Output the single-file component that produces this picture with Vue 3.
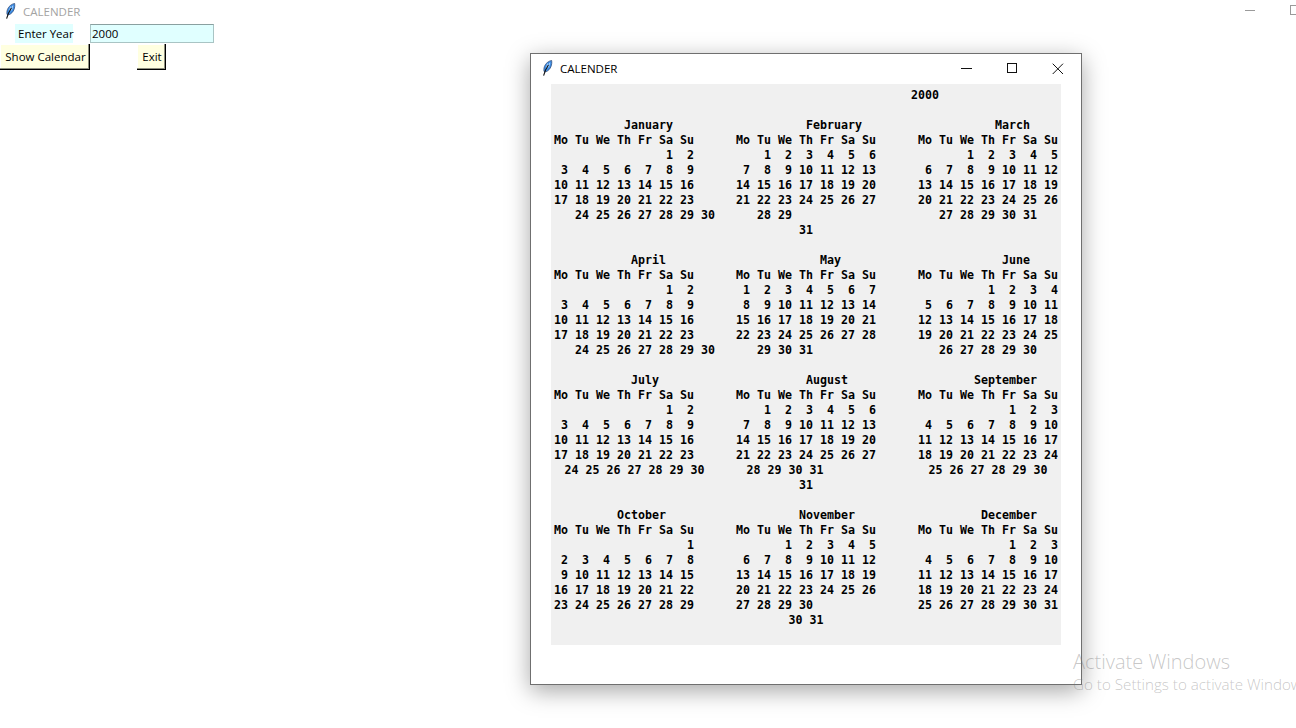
<script setup>
const monthNames = ['January','February','March','April','May','June','July','August','September','October','November','December']
const YEAR = 2000

function center(s, w) {
  const pad = w - s.length
  if (pad <= 0) return s
  const left = Math.floor(pad / 2) + (pad & w & 1)
  return ' '.repeat(left) + s + ' '.repeat(pad - left)
}
function rstrip(s) { return s.replace(/\s+$/, '') }
function join3(cols) { return rstrip(cols.map(c => center(c, 20)).join('      ')) }
function weeks(month) {
  const first = (new Date(Date.UTC(YEAR, month, 1)).getUTCDay() + 6) % 7
  const count = new Date(Date.UTC(YEAR, month + 1, 0)).getUTCDate()
  const cells = Array(first).fill('  ')
  for (let d = 1; d <= count; d++) cells.push(String(d).padStart(2, ' '))
  while (cells.length % 7) cells.push('  ')
  const out = []
  for (let i = 0; i < cells.length; i += 7) out.push(cells.slice(i, i + 7).join(' '))
  return out
}
const lines = [rstrip(center(String(YEAR), 72)), '']
for (let q = 0; q < 4; q++) {
  const ms = [q * 3, q * 3 + 1, q * 3 + 2]
  lines.push(join3(ms.map(m => monthNames[m])))
  lines.push(join3(ms.map(() => 'Mo Tu We Th Fr Sa Su')))
  const cal = ms.map(weeks)
  const height = Math.max(...cal.map(c => c.length))
  for (let j = 0; j < height; j++) lines.push(join3(cal.map(c => c[j] || '')))
  lines.push('')
}
</script>

<template>
  <div class="desktop">
    <section class="main-window">
      <header class="main-title">
        <svg class="feather" viewBox="0 0 12 16" width="12" height="16" aria-hidden="true">
          <path d="M3 11.4 C2.2 7 4.6 2 10.6 .4 C11.4 4 9.8 10 4.8 11.8 Z" fill="#3f8fe6" stroke="#27406e" stroke-width=".7"/>
          <path d="M6.6 3.6 L5.6 8.6 M8.8 2.8 L7.4 7.4" stroke="#cfe4fa" stroke-width=".8" fill="none"/>
          <path d="M7.4 5 C5.6 7.6 3.8 11 2.6 15.6" stroke="#111" stroke-width="1.1" fill="none"/>
        </svg>
        <span>CALENDER</span>
      </header>
      <div class="form-row">
        <label class="year-label">Enter Year</label>
        <input class="year-entry" value="2000" readonly />
      </div>
      <div class="button-row">
        <button class="tk-btn show">Show Calendar</button>
        <button class="tk-btn exit">Exit</button>
      </div>
      <div class="bg-controls" aria-hidden="true">
        <span class="bg-min"></span>
        <span class="bg-max"></span>
      </div>
    </section>

    <section class="cal-window">
      <header class="cal-title">
        <svg class="feather" viewBox="0 0 12 16" width="12" height="16" aria-hidden="true">
          <path d="M3 11.4 C2.2 7 4.6 2 10.6 .4 C11.4 4 9.8 10 4.8 11.8 Z" fill="#3f8fe6" stroke="#27406e" stroke-width=".7"/>
          <path d="M6.6 3.6 L5.6 8.6 M8.8 2.8 L7.4 7.4" stroke="#cfe4fa" stroke-width=".8" fill="none"/>
          <path d="M7.4 5 C5.6 7.6 3.8 11 2.6 15.6" stroke="#111" stroke-width="1.1" fill="none"/>
        </svg>
        <span class="cal-name">CALENDER</span>
        <div class="controls">
          <svg width="12" height="12" viewBox="0 0 12 12" aria-hidden="true"><path d="M1 5.5H12" stroke="#111" fill="none"/></svg>
          <svg width="12" height="12" viewBox="0 0 12 12" aria-hidden="true"><rect x="1.5" y=".5" width="9" height="9" stroke="#111" fill="none"/></svg>
          <svg width="12" height="12" viewBox="0 0 12 12" aria-hidden="true"><path d="M.7 .7L11 11M11 .7L.7 11" stroke="#111" fill="none"/></svg>
        </div>
      </header>
      <div class="cal-body">
        <div class="cal-text">
          <div v-for="(line, i) in lines" :key="i" class="line">{{ line }}</div>
        </div>
      </div>
    </section>

    <div class="activate">
      <div class="a1">Activate Windows</div>
      <div class="a2">Go to Settings to activate Windows.</div>
    </div>
  </div>
</template>

<style>
html, body { margin: 0; background: #fff; overflow: hidden; }
</style>

<style scoped>
.desktop {
  position: relative;
  width: 1296px;
  height: 728px;
  overflow: hidden;
  background: #fff;
  font-family: "Open Sans", "Noto Sans", sans-serif;
  font-size: 11.5px;
  color: #000;
}
.main-window { display: flex; flex-direction: column; }
.main-title {
  display: flex;
  align-items: center;
  height: 22px;
  margin-bottom: 2px;
  padding-left: 4px;
  gap: 7px;
  color: #a3a3a3;
  box-sizing: border-box;
}
.form-row { display: flex; height: 20px; padding-left: 15px; }
.year-label {
  width: 58px;
  height: 19px;
  box-sizing: border-box;
  padding-left: 3px;
  background: #e0ffff;
  text-align: center;
  line-height: 19px;
  white-space: nowrap;
}
.year-entry {
  margin-left: 17px;
  width: 124px;
  height: 19px;
  box-sizing: border-box;
  border: 1px solid #a9c4c4;
  border-top-color: #8aa0a0;
  background: #e0ffff;
  padding: 0 1px;
  font: inherit;
  color: #000;
  outline: none;
}
.button-row { display: flex; }
.tk-btn {
  height: 26px;
  padding: 0 1px 1px 2px;
  box-sizing: border-box;
  background: #ffffe0;
  border: none;
  box-shadow: inset -1px -1px #000, inset -2px -2px #8f8f80, inset 1px 1px #fff;
  font: inherit;
  color: #000;
  white-space: nowrap;
}
.show { width: 90px; }
.exit { width: 29px; margin-left: 47px; }
.bg-controls {
  position: absolute;
  top: 0;
  left: 1245px;
  height: 20px;
  display: flex;
  align-items: center;
}
.bg-min { width: 10px; height: 1px; background: #9a9a9a; }
.bg-max {
  margin-left: 35px;
  margin-bottom: 1px;
  width: 8px;
  height: 8px;
  border: 1px solid #9a9a9a;
  border-right: none;
}
.cal-window {
  position: absolute;
  left: 530px;
  top: 53px;
  width: 552px;
  height: 632px;
  box-sizing: border-box;
  border: 1px solid #6f6f6f;
  background: #fff;
  box-shadow: 0 6px 22px rgba(0, 0, 0, .35);
  display: flex;
  flex-direction: column;
}
.cal-title {
  display: flex;
  align-items: center;
  height: 30px;
  padding-left: 10px;
  padding-bottom: 2px;
  box-sizing: border-box;
  flex: none;
}
.cal-name { margin-left: 7px; font-size: 11.5px; }
.controls {
  margin-left: auto;
  margin-right: 17px;
  margin-top: 2px;
  display: flex;
  gap: 34px;
}
.cal-body { padding: 0 20px; }
.cal-text {
  background: #f0f0f0;
  height: 561px;
  box-sizing: border-box;
  padding: 4px 0 2px;
  font-family: "DejaVu Sans Mono", "Liberation Mono", monospace;
  font-weight: 700;
  font-size: 11.63px;
  line-height: 15px;
  text-align: center;
}
.line { height: 15px; white-space: pre; }
.activate {
  position: absolute;
  left: 1073px;
  top: 649px;
  white-space: nowrap;
  color: rgba(120, 120, 120, .42);
  font-family: "Open Sans", "Noto Sans", sans-serif;
  font-weight: 300;
}
.a1 { font-size: 20px; line-height: 26px; }
.a2 { font-size: 15.2px; line-height: 19px; }
</style>
